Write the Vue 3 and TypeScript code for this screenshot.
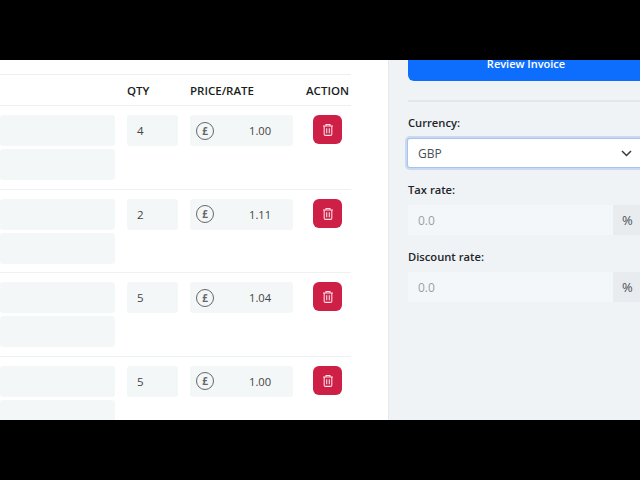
<script setup lang="ts">
interface Row { qty: number; price: string }
const rows: Row[] = [
  { qty: 4, price: '1.00' },
  { qty: 2, price: '1.11' },
  { qty: 5, price: '1.04' },
  { qty: 5, price: '1.00' },
]
</script>

<template>
  <div class="frame">
    <div class="bar"></div>
    <main class="main">
      <section class="left">
        <div class="table">
          <div class="grid head">
            <span></span>
            <span>QTY</span>
            <span>PRICE/RATE</span>
            <span class="action-head">ACTION</span>
          </div>
          <div v-for="(r, i) in rows" :key="i" class="grid row">
            <div class="names">
              <div class="field name"></div>
              <div class="field name"></div>
            </div>
            <div class="field qty">{{ r.qty }}</div>
            <div class="field price">
              <span class="coin">£</span>
              <span class="amount">{{ r.price }}</span>
            </div>
            <button class="del" type="button" aria-label="Delete">
              <svg width="12" height="13" viewBox="0 0 12 13" fill="none" stroke="#fbdde4" stroke-width="1.1">
                <path d="M1 3h10M4 3V1.5h4V3M2.2 3v8.2c0 .7.4 1.2 1.1 1.2h5.4c.7 0 1.1-.5 1.1-1.2V3M4.7 5.3v5M7.3 5.3v5" />
              </svg>
            </button>
          </div>
        </div>
      </section>
      <aside class="right">
        <button class="review" type="button">Review Invoice</button>
        <hr class="divider" />
        <label class="label first">Currency:</label>
        <div class="select">
          <span>GBP</span>
          <svg width="11" height="7" viewBox="0 0 11 7" fill="none" stroke="#343a40" stroke-width="1.5">
            <path d="M1 1l4.5 4.5L10 1" />
          </svg>
        </div>
        <label class="label">Tax rate:</label>
        <div class="group">
          <div class="pct-input">0.0</div>
          <div class="addon">%</div>
        </div>
        <label class="label tight">Discount rate:</label>
        <div class="group">
          <div class="pct-input">0.0</div>
          <div class="addon">%</div>
        </div>
      </aside>
    </main>
    <div class="bar"></div>
  </div>
</template>

<style scoped>
.frame {
  width: 640px;
  height: 480px;
  overflow: hidden;
  display: flex;
  flex-direction: column;
  font-family: "Open Sans", "Noto Sans", sans-serif;
  color: #212529;
}
.bar {
  height: 60px;
  background: #000;
  flex: none;
}
.main {
  height: 360px;
  display: flex;
  overflow: hidden;
  background: #fff;
}
.left {
  width: 388px;
  flex: none;
  padding-top: 14px;
  box-sizing: border-box;
}
.table {
  width: 351px;
}
.grid {
  display: grid;
  grid-template-columns: 115px 51px 103px 46px;
  column-gap: 12px;
}
.head {
  height: 30px;
  border-top: 1px solid #eceef0;
  border-bottom: 1px solid #eceef0;
  align-items: center;
  font-size: 11.5px;
  font-weight: 600;
  color: #1a1d20;
}
.action-head {
  margin-left: 1px;
  white-space: nowrap;
}
.row {
  padding: 9px 0 8.5px;
  border-bottom: 1px solid #eef0f2;
  align-items: start;
}
.names {
  display: flex;
  flex-direction: column;
  gap: 3px;
}
.field {
  height: 31px;
  background: #f4f7f8;
  border-radius: 3px;
  font-size: 11.5px;
  color: #444;
  display: flex;
  align-items: center;
}
.qty {
  padding-left: 10px;
}
.price {
  padding-left: 6px;
}
.coin {
  width: 18px;
  height: 18px;
  box-sizing: border-box;
  flex: none;
  border: 1.3px solid #666;
  border-radius: 50%;
  display: flex;
  align-items: center;
  justify-content: center;
  font-size: 10px;
  font-weight: 700;
  color: #666;
}
.amount {
  margin-left: 35px;
  font-size: 11.2px;
}
.del {
  width: 29px;
  height: 29px;
  justify-self: end;
  margin-right: 9px;
  padding: 0;
  border: 0;
  border-radius: 6px;
  background: #ce1f47;
  display: flex;
  align-items: center;
  justify-content: center;
}
.right {
  flex: 1;
  border-left: 1px solid #e6e9ed;
  background: #f0f3f6;
  padding-left: 19px;
  min-width: 0;
}
.right > * {
  width: 240px;
  box-sizing: border-box;
}
.review {
  display: block;
  height: 43px;
  margin-top: -22px;
  padding: 8px 4px 0 0;
  border: 0;
  border-radius: 6px;
  background: #0d6efd;
  color: #fff;
  font-family: inherit;
  font-size: 11px;
  line-height: 8px;
  font-weight: 600;
}
.divider {
  margin: 19px 0 0;
  border: 0;
  height: 2px;
  background: #e3e6ea;
}
.label {
  display: block;
  height: 16px;
  line-height: 16px;
  margin-top: 15px;
  font-size: 11.2px;
  font-weight: 600;
  color: #212529;
}
.label.first {
  margin-top: 13px;
}
.label.tight {
  margin-top: 14px;
}
.select {
  height: 28px;
  margin-top: 8px;
  padding: 0 16px 0 10px;
  background: #fff;
  border-radius: 2px;
  box-shadow: 0 0 0 1px #a9c3ea, 0 0 0 3px #c9d9f1;
  display: flex;
  align-items: center;
  justify-content: space-between;
  font-size: 12px;
  color: #495057;
}
.group {
  display: flex;
  height: 30px;
  margin-top: 7px;
}
.pct-input {
  width: 205px;
  padding-left: 10px;
  box-sizing: border-box;
  background: #f4f7f9;
  font-size: 12px;
  color: #9a9fa4;
  display: flex;
  align-items: center;
}
.addon {
  flex: 1;
  padding-left: 9px;
  background: #e9ecef;
  font-size: 13px;
  color: #495057;
  display: flex;
  align-items: center;
}
</style>
